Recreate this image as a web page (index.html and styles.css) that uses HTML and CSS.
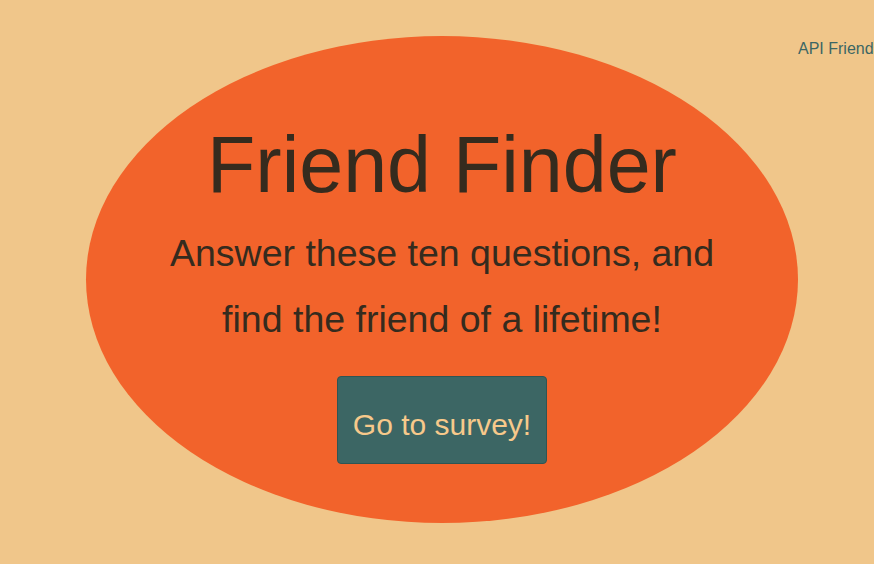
FILE: index.html
```html
<!DOCTYPE html>
<html>
<head>
<meta charset="utf-8">
<title>Friend Finder</title>
<link rel="stylesheet" href="styles.css">
</head>
<body>
<div class="page">
  <main class="hero">
    <h1 class="title">Friend Finder</h1>
    <p class="subtitle">Answer these ten questions, and<br>find the friend of a lifetime!</p>
    <a class="btn" href="#">Go to survey!</a>
  </main>
  <a class="api-link" href="#">API Friends List</a>
</div>
</body>
</html>
```
FILE: styles.css
```css
html, body {
  margin: 0;
  padding: 0;
  background: #f0c68a;
  font-family: "Liberation Sans", Arial, sans-serif;
  overflow: hidden;
}
.page {
  display: flex;
  align-items: flex-start;
  padding: 36px 0 0 86px;
  height: 564px;
  box-sizing: border-box;
}
.hero {
  flex: 0 0 712px;
  width: 712px;
  height: 487px;
  border-radius: 50%;
  background: #f2632b;
  display: flex;
  flex-direction: column;
  align-items: center;
  text-align: center;
  padding-top: 89px;
  box-sizing: border-box;
  color: #352b1e;
}
.title {
  margin: 0;
  font-size: 79px;
  font-weight: normal;
  line-height: 79px;
}
.subtitle {
  margin: 16px 0 0;
  font-size: 37.5px;
  line-height: 66px;
}
.btn {
  margin-top: 24px;
  display: block;
  width: 210px;
  box-sizing: border-box;
  padding: 31px 0 21px;
  background: #3c6664;
  border: 1px solid #2f5553;
  border-radius: 4px;
  color: #f7c98b;
  font-size: 30px;
  text-decoration: none;
}
.api-link {
  flex: 0 0 auto;
  white-space: nowrap;
  color: #3c6664;
  font-size: 16px;
  text-decoration: none;
  margin-top: 4px;
}
```
